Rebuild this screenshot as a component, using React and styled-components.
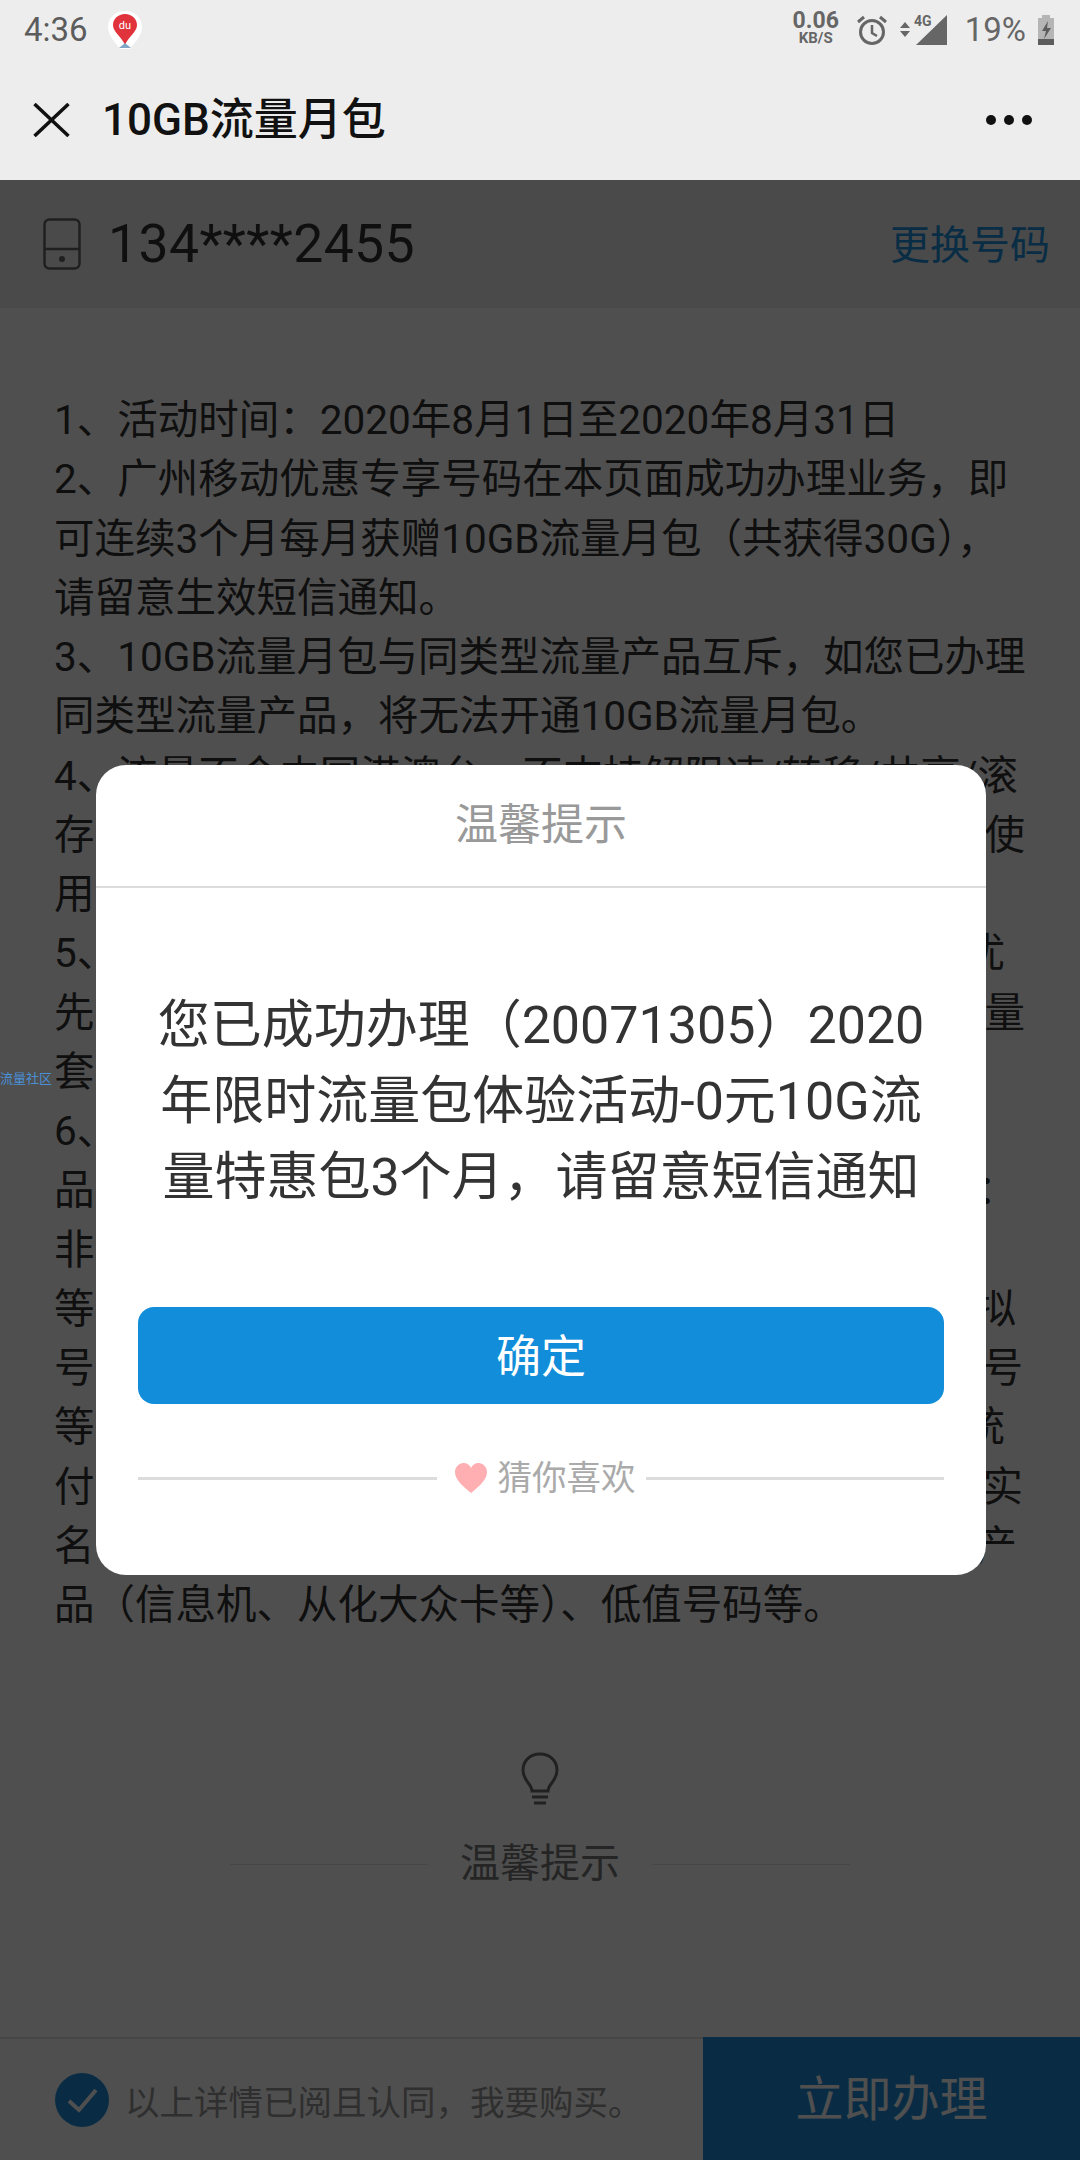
import React from "react";
import styled, { createGlobalStyle } from "styled-components";

const GlobalStyle = createGlobalStyle`
html, body {
  margin: 0;
  padding: 0;
  background: #ededed;
  font-family: Roboto, "Noto Sans CJK SC", sans-serif;
}
* { box-sizing: border-box; }
`;

const Page = styled.div`
width: 1080px;
height: 2160px;
display: flex;
flex-direction: column;
overflow: hidden;
background: #fff;
`;

const StatusBar = styled.div`
height: 60px;
flex: none;
display: flex;
align-items: center;
padding: 0 25px 0 24px;
background: #ededed;
color: #666;
`;

const Clock = styled.span`
font-size: 33px;
line-height: 60px;
color: #5c5c5c;
margin-right: 19px;
`;

const StatusRight = styled.div`
margin-left: auto;
display: flex;
align-items: center;
`;

const Speed = styled.div`
width: 50px;
margin: -4px 16px 0 0;
display: flex;
flex-direction: column;
align-items: center;
font-weight: 700;
font-size: 23px;
line-height: 20px;
small {
  font-size: 15px;
  line-height: 15px;
}
`;

const SignalSlot = styled.div`
display: flex;
margin-left: 13px;
`;

const Percent = styled.span`
font-size: 33px;
line-height: 60px;
color: #666;
margin: 0 11px 0 17px;
`;

const NavBar = styled.div`
height: 120px;
flex: none;
display: flex;
align-items: center;
padding: 0 48px 0 33px;
background: #ededed;
`;

const NavTitle = styled.h1`
margin: 0 0 0 32px;
font-size: 44px;
line-height: 60px;
font-weight: 500;
color: #111;
`;

const MoreDots = styled.div`
margin-left: auto;
display: flex;
gap: 8px;
i {
  width: 10px;
  height: 10px;
  border-radius: 50%;
  background: #111;
}
`;

const Content = styled.main`
position: relative;
flex: 1;
display: flex;
flex-direction: column;
background: #ffffff;
`;

const PhoneBar = styled.div`
height: 128px;
flex: none;
display: flex;
align-items: center;
padding: 0 30px 0 43px;
background: #eeeeee;
`;

const PhoneNumber = styled.span`
margin: -2px 0 0 27px;
font-size: 53.5px;
color: #333;
letter-spacing: 0.4px;
`;

const ChangeLink = styled.a`
margin: -4px 0 0 auto;
font-size: 40px;
color: #1a90dc;
`;

const Notes = styled.div`
padding: 83px 55px 0 54px;
color: #333;
font-size: 40.5px;
line-height: 59.25px;
`;

const Line = styled.div`
display: flex;
justify-content: space-between;
white-space: nowrap;
width: 971px;
span:last-child:not(:first-child) {
  margin-right: ${(p) => p.$inset || 0}px;
}
`;

const TipSection = styled.section`
margin-top: 117px;
display: flex;
flex-direction: column;
align-items: center;
`;

const TipTitle = styled.div`
margin-top: 28px;
display: flex;
align-items: center;
gap: 32px;
font-size: 40px;
line-height: 60px;
color: #777;
&::before, &::after {
  content: "";
  width: 198px;
  height: 1px;
  background: #e0e0e0;
}
`;

const Footer = styled.footer`
margin-top: auto;
height: 123px;
flex: none;
display: flex;
background: #fff;
border-top: 2px solid #e2e2e2;
`;

const AgreeRow = styled.div`
flex: 1;
display: flex;
align-items: center;
padding-left: 55px;
`;

const AgreeText = styled.span`
margin-left: 16px;
font-size: 34.5px;
color: #999;
`;

const BuyButton = styled.button`
width: 377px;
margin-top: -2px;
border: 0;
padding: 0 0 8px;
background: #1e8fdc;
color: #fff;
font: inherit;
font-size: 48px;
`;

const Overlay = styled.div`
position: absolute;
inset: 0;
display: flex;
align-items: center;
justify-content: center;
background: rgba(0, 0, 0, 0.69);
`;

const SideTab = styled.div`
position: absolute;
left: 0;
top: 892px;
width: 54px;
overflow: hidden;
white-space: nowrap;
font-size: 13px;
line-height: 14px;
color: #4a90d6;
`;

const Modal = styled.div`
width: 890px;
height: 810px;
margin-left: 2px;
border-radius: 30px;
background: #fff;
display: flex;
flex-direction: column;
`;

const ModalTitle = styled.div`
height: 123px;
flex: none;
display: flex;
align-items: center;
justify-content: center;
padding-bottom: 10px;
border-bottom: 2px solid #dcdcdc;
font-size: 43px;
color: #999;
`;

const ModalMessage = styled.p`
margin: 100px 0 0;
padding: 0 40px;
text-align: center;
font-size: 52px;
line-height: 76px;
color: #333;
white-space: nowrap;
`;

const ConfirmButton = styled.button`
margin: 91px 42px 0;
height: 97px;
flex: none;
border: 0;
border-radius: 16px;
padding: 0 0 4px;
background: #128dd9;
color: #fff;
font: inherit;
font-size: 45px;
`;

const GuessRow = styled.div`
margin: 49px 42px 0;
display: flex;
align-items: center;
font-size: 34.5px;
line-height: 50px;
color: #aaa;
&::before, &::after {
  content: "";
  flex: 1;
  height: 3px;
  background: #dcdcdc;
}
svg {
  margin: 0 11px 0 18px;
}
span {
  margin-right: 10px;
}
`;

const noteLines = [
  ["1、活动时间：2020年8月1日至2020年8月31日"],
  ["2、广州移动优惠专享号码在本页面成功办理业务，即"],
  ["可连续3个月每月获赠10GB流量月包（共获得30G），"],
  ["请留意生效短信通知。"],
  ["3、10GB流量月包与同类型流量产品互斥，如您已办理"],
  ["同类型流量产品，将无法开通10GB流量月包。"],
  ["4、流量不含中国港澳台，不支持解限速/转移/共享/滚"],
  ["存", "使"],
  ["用"],
  ["5、", "优", 20],
  ["先", "量"],
  ["套"],
  ["6、"],
  ["品", "：", 8],
  ["非"],
  ["等", "拟", 9],
  ["号", "号", 2],
  ["等", "统", 20],
  ["付", "实", 2],
  ["名", "产", 8],
  ["品（信息机、从化大众卡等）、低值号码等。"],
];

const DuPin = () => (
  <svg width="36" height="40" viewBox="0 0 36 40">
    <path d="M18 1C8 1 1 8 1 17c0 9 8 16 12 22h10c4-6 12-13 12-22C35 8 28 1 18 1z" fill="#fff" />
    <path d="M18 4c-7 0-12 5-12 11 0 7 8 11 12 20 4-9 12-13 12-20 0-6-5-11-12-11z" fill="#e0333c" />
    <path d="M12 38l6-5 6 5z" fill="#7fa8c8" />
    <text x="18" y="19" fontSize="11" fill="#fff" textAnchor="middle" fontFamily="Roboto, sans-serif">du</text>
  </svg>
);

const AlarmIcon = () => (
  <svg width="30" height="30" viewBox="0 0 30 30" fill="none" stroke="#666" strokeWidth="3">
    <circle cx="15" cy="17" r="11.5" />
    <path d="M15 10v8l5 3" strokeWidth="2.5" />
    <path d="M1 7l6-5M29 7l-6-5" />
  </svg>
);

const SignalIcon = () => (
  <svg width="48" height="32" viewBox="0 0 48 32">
    <path d="M0 14l5-6 5 6zM0 17l5 6 5-6z" fill="#666" />
    <path d="M16 31L47 1v30z" fill="#666" />
    <text x="14" y="12" fontSize="14" fontWeight="700" fill="#666" fontFamily="Roboto, sans-serif">4G</text>
  </svg>
);

const BatteryIcon = () => (
  <svg width="18" height="30" viewBox="0 0 18 30">
    <path d="M5 0h8v3h4v27H1V3h4z" fill="#b5b5b5" />
    <path d="M1 24h16v6H1z" fill="#5c5c5c" />
    <path d="M11 6L5 16h4l-2 8 7-11h-4z" fill="#5c5c5c" />
  </svg>
);

const CloseIcon = () => (
  <svg width="37" height="34" viewBox="0 0 37 34" fill="none" stroke="#111" strokeWidth="3.5">
    <path d="M1.5 1l34 32M35.5 1l-34 32" />
  </svg>
);

const PhoneIcon = () => (
  <svg width="38" height="52" viewBox="0 0 38 52" fill="none" stroke="#666" strokeWidth="2.5">
    <rect x="1.5" y="1.5" width="35" height="49" rx="5" />
    <path d="M1.5 31h35" />
    <circle cx="19" cy="41" r="3" fill="#666" stroke="none" />
  </svg>
);

const BulbIcon = () => (
  <svg width="38" height="54" viewBox="0 0 38 54" fill="none" stroke="#6a6a6a" strokeWidth="3">
    <path d="M11 39c0-7-9-10-9-21C2 9 9 2 19 2s17 7 17 16c0 11-9 14-9 21z" />
    <path d="M11 45h16M13 51h12" />
  </svg>
);

const CheckIcon = () => (
  <svg width="54" height="54" viewBox="0 0 54 54">
    <circle cx="27" cy="27" r="27" fill="#1e8fdc" />
    <path d="M14 28l10 9 17-20" fill="none" stroke="#fff" strokeWidth="4" />
  </svg>
);

const HeartIcon = () => (
  <svg width="32" height="30" viewBox="0 0 32 30">
    <path d="M16 30C8 23 0 17 0 9c0-5 4-9 8.500-9C12 0 15 2 16 5c1-3 4-5 7.500-5C28 0 32 4 32 9c0 8-8 14-16 21z" fill="#ffaeb2" />
  </svg>
);

export default function App() {
  return (
    <Page>
      <GlobalStyle />
      <StatusBar>
        <Clock>4:36</Clock>
        <DuPin />
        <StatusRight>
          <Speed>
            0.06
            <small>KB/S</small>
          </Speed>
          <AlarmIcon />
          <SignalSlot>
            <SignalIcon />
          </SignalSlot>
          <Percent>19%</Percent>
          <BatteryIcon />
        </StatusRight>
      </StatusBar>
      <NavBar>
        <CloseIcon />
        <NavTitle>10GB流量月包</NavTitle>
        <MoreDots>
          <i />
          <i />
          <i />
        </MoreDots>
      </NavBar>
      <Content>
        <PhoneBar>
          <PhoneIcon />
          <PhoneNumber>134****2455</PhoneNumber>
          <ChangeLink>更换号码</ChangeLink>
        </PhoneBar>
        <Notes>
          {noteLines.map(([start, end, inset], i) => (
            <Line key={i} $inset={inset}>
              <span>{start}</span>
              {end && <span>{end}</span>}
            </Line>
          ))}
        </Notes>
        <TipSection>
          <BulbIcon />
          <TipTitle>温馨提示</TipTitle>
        </TipSection>
        <Footer>
          <AgreeRow>
            <CheckIcon />
            <AgreeText>以上详情已阅且认同，我要购买。</AgreeText>
          </AgreeRow>
          <BuyButton>立即办理</BuyButton>
        </Footer>
        <Overlay>
          <Modal>
            <ModalTitle>温馨提示</ModalTitle>
            <ModalMessage>
              您已成功办理（20071305）2020
              <br />
              年限时流量包体验活动-0元10G流
              <br />
              量特惠包3个月，请留意短信通知
            </ModalMessage>
            <ConfirmButton>确定</ConfirmButton>
            <GuessRow>
              <HeartIcon />
              <span>猜你喜欢</span>
            </GuessRow>
          </Modal>
        </Overlay>
        <SideTab>流量社区</SideTab>
      </Content>
    </Page>
  );
}
